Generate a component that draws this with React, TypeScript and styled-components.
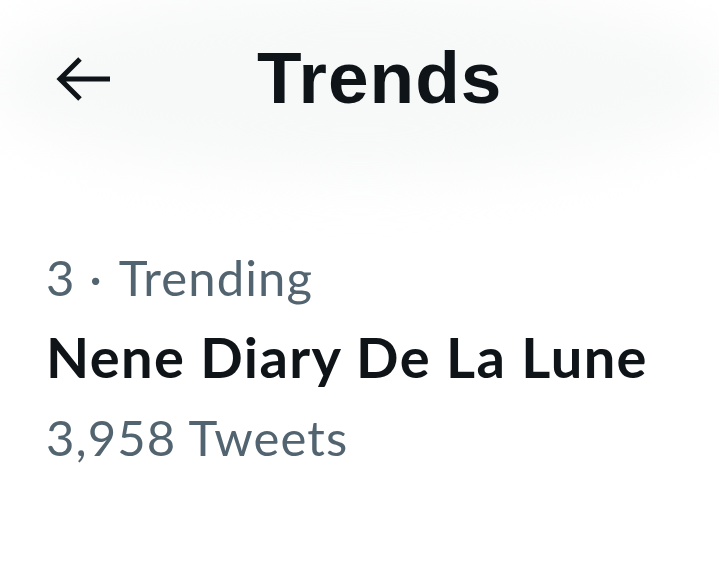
import React from "react";
import styled, { createGlobalStyle } from "styled-components";

const Global = createGlobalStyle`
  html, body { margin: 0; padding: 0; background: #ffffff; }
  body { font-family: Lato, "Noto Sans", sans-serif; }
`;

const Page = styled.div`
  position: relative;
  width: 719px;
  height: 562px;
  overflow: hidden;
  background: #ffffff;
`;

const Haze = styled.div`
  position: absolute;
  left: -10px;
  top: -10px;
  width: 740px;
  height: 185px;
  border-radius: 50%;
  background: #f7f8f8;
  filter: blur(28px);
  z-index: 0;
`;

const Header = styled.header`
  position: relative;
  z-index: 1;
  display: flex;
  align-items: center;
  height: 158px;
  padding-left: 56px;
  gap: 145px;
`;

const BackIcon = styled.svg`
  width: 56px;
  height: 46px;
  color: #0f1419;
  flex: none;
`;

const Title = styled.h1`
  margin: 0;
  font-family: "Liberation Sans", Arial, sans-serif;
  font-weight: 700;
  font-size: 73px;
  line-height: 1;
  letter-spacing: 1px;
  color: #0f1419;
  transform: translateY(-2px);
`;

const Trend = styled.section`
  position: relative;
  z-index: 1;
  display: flex;
  flex-direction: column;
  padding: 84px 46px 0;
`;

const Meta = styled.div`
  font-family: Lato, sans-serif;
  font-size: 49px;
  line-height: 70px;
  letter-spacing: 1.1px;
  color: #536471;
`;

const Dot = styled.span`
  margin: 0 2px 0 0;
`;

const Name = styled.div`
  font-family: Lato, sans-serif;
  font-weight: 700;
  font-size: 56px;
  line-height: 90px;
  letter-spacing: 1.4px;
  color: #0f1419;
`;

export default function App() {
  return (
    <Page>
      <Global />
      <Haze />
      <Header>
        <BackIcon viewBox="0 0 56 46" fill="none" aria-label="Back">
          <path
            d="M24 3 L4 23 L24 43 M4 23 H54"
            stroke="currentColor"
            strokeWidth="5"
            strokeLinecap="butt"
            strokeLinejoin="miter"
          />
        </BackIcon>
        <Title>Trends</Title>
      </Header>
      <Trend>
        <Meta>
          3<Dot> · </Dot>Trending
        </Meta>
        <Name>Nene Diary De La Lune</Name>
        <Meta>3,958 Tweets</Meta>
      </Trend>
    </Page>
  );
}
